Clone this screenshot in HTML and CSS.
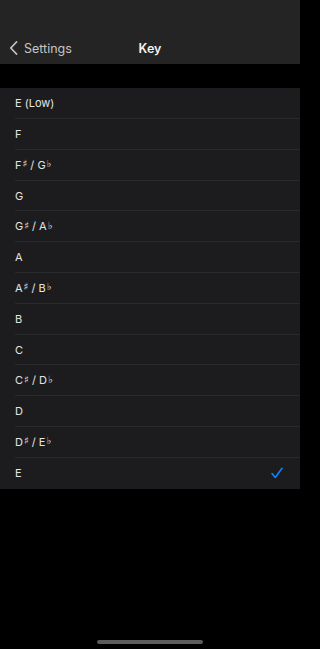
FILE: index.html
```html
<!DOCTYPE html>
<html>
<head>
<meta charset="utf-8">
<link rel="stylesheet" href="styles.css">
</head>
<body>
<div class="screen">
  <header class="nav">
    <div class="nav-row">
      <div class="back">
        <svg class="chev" width="9" height="14" viewBox="0 0 9 14"><path d="M7.5 1 L1.8 7 L7.5 13" fill="none" stroke="#c4c4c4" stroke-width="1.8" stroke-linecap="round" stroke-linejoin="round"/></svg>
        <span>Settings</span>
      </div>
      <div class="title">Key</div>
    </div>
  </header>
  <div class="gap"></div>
  <ul class="list">
    <li class="row"><span class="inner">E (Low)</span></li>
    <li class="row"><span class="inner">F</span></li>
    <li class="row"><span class="inner">F<span class="acc">♯</span> / G<span class="acc">♭</span></span></li>
    <li class="row"><span class="inner">G</span></li>
    <li class="row"><span class="inner">G<span class="acc">♯</span> / A<span class="acc">♭</span></span></li>
    <li class="row"><span class="inner">A</span></li>
    <li class="row"><span class="inner">A<span class="acc">♯</span> / B<span class="acc">♭</span></span></li>
    <li class="row"><span class="inner">B</span></li>
    <li class="row"><span class="inner">C</span></li>
    <li class="row"><span class="inner">C<span class="acc">♯</span> / D<span class="acc">♭</span></span></li>
    <li class="row"><span class="inner">D</span></li>
    <li class="row"><span class="inner">D<span class="acc">♯</span> / E<span class="acc">♭</span></span></li>
    <li class="row last"><span class="inner"><span>E</span><svg class="check" width="12" height="12" viewBox="0 0 12 12"><path d="M1 6.6 L4.3 10.5 L11 1.3" fill="none" stroke="#0a84ff" stroke-width="1.6" stroke-linecap="round" stroke-linejoin="round"/></svg></span></li>
  </ul>
  <div class="home"><div class="bar"></div></div>
</div>
</body>
</html>
```
FILE: styles.css
```css
html, body { margin: 0; padding: 0; background: #000; }
body { font-family: "Inter", "Liberation Sans", sans-serif; color: #e4e4e4; }
.screen { width: 300px; height: 649px; display: flex; flex-direction: column; }
.nav { height: 64px; background: #242424; box-sizing: border-box; padding-top: 32px; }
.nav-row { height: 32px; display: flex; align-items: center; position: relative; }
.back { display: flex; align-items: center; padding-left: 9px; color: #c4c4c4; font-size: 12.5px; }
.back .chev { margin-right: 6px; }
.title { position: absolute; left: 0; right: 0; text-align: center; font-size: 12.5px; font-weight: 600; color: #f2f2f2; pointer-events: none; }
.gap { height: 24.3px; }
.list { list-style: none; margin: 0; padding: 0; background: #1c1c1e; }
.row { height: 30.8px; padding-left: 15px; display: flex; }
.inner { flex: 1; display: flex; align-items: center; border-bottom: 1px solid #29292b; font-size: 11px; padding-right: 17px; }
.last .inner { border-bottom: none; }
.acc { font-family: "DejaVu Sans", sans-serif; font-size: 10px; font-weight: 700; position: relative; top: -1px; margin-left: 1px; margin-right: 3px; }
.check { margin-left: auto; }
.home { margin-top: auto; height: 9px; display: flex; justify-content: center; }
.bar { width: 106px; height: 4px; border-radius: 2px; background: #5c5c5c; }
```
